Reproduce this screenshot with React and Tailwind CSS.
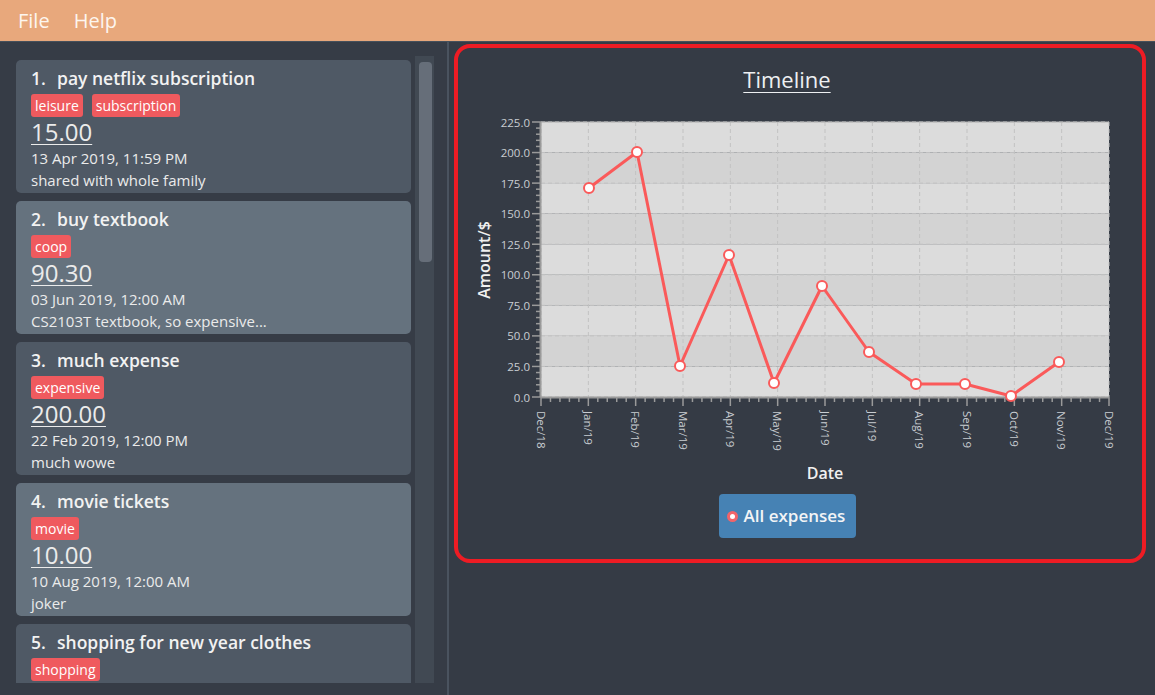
import React from "react";

const FONT = { fontFamily: '"Open Sans", "Noto Sans", sans-serif' };

const EXPENSES = [
  {
    id: 1,
    name: "pay netflix subscription",
    tags: ["leisure", "subscription"],
    amount: "15.00",
    date: "13 Apr 2019, 11:59 PM",
    remark: "shared with whole family",
  },
  {
    id: 2,
    name: "buy textbook",
    tags: ["coop"],
    amount: "90.30",
    date: "03 Jun 2019, 12:00 AM",
    remark: "CS2103T textbook, so expensive...",
  },
  {
    id: 3,
    name: "much expense",
    tags: ["expensive"],
    amount: "200.00",
    date: "22 Feb 2019, 12:00 PM",
    remark: "much wowe",
  },
  {
    id: 4,
    name: "movie tickets",
    tags: ["movie"],
    amount: "10.00",
    date: "10 Aug 2019, 12:00 AM",
    remark: "joker",
  },
  {
    id: 5,
    name: "shopping for new year clothes",
    tags: ["shopping"],
  },
];

const MONTHS = [
  "Dec/18", "Jan/19", "Feb/19", "Mar/19", "Apr/19", "May/19", "Jun/19",
  "Jul/19", "Aug/19", "Sep/19", "Oct/19", "Nov/19", "Dec/19",
];

// points in chart-local pixels
const POINTS = [
  [127, 78], [175, 42], [218, 256], [267, 145], [312, 273], [360, 176],
  [407, 242], [454, 274], [503, 274], [549, 286], [597, 252],
];

const PX0 = 79;
const PX1 = 647;
const PY0 = 12;
const PY1 = 287;

function ExpenseCard({ expense, index }) {
  const bg = index % 2 === 0 ? "bg-[#4f5965]" : "bg-[#65727e]";
  return (
    <div className={`${bg} h-[133px] shrink-0 rounded-[5px] pl-[15px] pt-[6px] text-[#ebebeb]`}>
      <div className="flex h-[24px] items-center text-[17.5px] font-semibold leading-[24px] text-[#f2f2f2]">
        <span className="w-[26px]">{expense.id}.</span>
        <span>{expense.name}</span>
      </div>
      <div className="mt-[4px] flex h-[23px] gap-[9px]">
        {expense.tags.map((tag) => (
          <span
            key={tag}
            className="flex h-[23px] items-center rounded-[3px] bg-[#ef5a5e] px-[4px] text-[14px] text-white"
          >
            {tag}
          </span>
        ))}
      </div>
      {expense.amount && (
        <>
          <div className="text-[24px] leading-[30px] underline decoration-1 underline-offset-[3px]">
            {expense.amount}
          </div>
          <div className="text-[15px] leading-[22px]">{expense.date}</div>
          <div className="text-[15px] leading-[22px]">{expense.remark}</div>
        </>
      )}
    </div>
  );
}

function TimelineChart() {
  const monthW = (PX1 - PX0) / 12;
  const bandH = (PY1 - PY0) / 9;
  const yTicks = Array.from({ length: 10 }, (_, i) => i);
  const linePoints = POINTS.map((p) => p.join(",")).join(" ");

  return (
    <svg width="660" height="380" viewBox="0 0 660 380" style={FONT}>
      {Array.from({ length: 9 }, (_, i) => (
        <rect
          key={`b${i}`}
          x={PX0}
          y={PY0 + i * bandH}
          width={PX1 - PX0}
          height={bandH}
          fill={i % 2 === 0 ? "#dcdcdc" : "#d3d3d3"}
        />
      ))}
      {yTicks.map((i) => (
        <line
          key={`h${i}`}
          x1={PX0}
          x2={PX1}
          y1={PY1 - i * bandH}
          y2={PY1 - i * bandH}
          stroke="#c2c2c2"
          strokeWidth="1"
          strokeDasharray="4 3"
        />
      ))}
      {MONTHS.map((m, i) => (
        <line
          key={`v${i}`}
          x1={PX0 + i * monthW}
          x2={PX0 + i * monthW}
          y1={PY0}
          y2={PY1}
          stroke="#c2c2c2"
          strokeWidth="1"
          strokeDasharray="4 3"
        />
      ))}
      <line x1={PX0} x2={PX1} y1={PY0} y2={PY0} stroke="#b5b5b5" />

      {/* y axis */}
      <line x1={PX0 - 0.5} x2={PX0 - 0.5} y1={PY0} y2={PY1} stroke="#9a9a9a" strokeWidth="2" />
      {yTicks.map((i) => {
        const y = PY1 - i * bandH;
        return (
          <g key={`yt${i}`}>
            <line x1={PX0 - 9} x2={PX0} y1={y} y2={y} stroke="#9a9a9a" strokeWidth="1.5" />
            <text
              x={PX0 - 11}
              y={y}
              textAnchor="end"
              dominantBaseline="central"
              fontSize="11.5"
              fill="#c9cdd2"
            >
              {(i * 25).toFixed(1)}
            </text>
            {i < 9 &&
              [1, 2, 3, 4].map((k) => (
                <line
                  key={k}
                  x1={PX0 - 5}
                  x2={PX0}
                  y1={y - (k * bandH) / 5}
                  y2={y - (k * bandH) / 5}
                  stroke="#9a9a9a"
                  strokeWidth="1.5"
                />
              ))}
          </g>
        );
      })}

      {/* x axis */}
      <line x1={PX0} x2={PX1} y1={PY1 + 0.5} y2={PY1 + 0.5} stroke="#9a9a9a" strokeWidth="2" />
      {MONTHS.map((m, i) => {
        const x = PX0 + i * monthW;
        return (
          <g key={`xt${i}`}>
            <line x1={x} x2={x} y1={PY1} y2={PY1 + 9} stroke="#9a9a9a" strokeWidth="1.5" />
            <text
              transform={`translate(${x} ${PY1 + 14}) rotate(90)`}
              dominantBaseline="central"
              fontSize="11.5"
              fill="#c9cdd2"
            >
              {m}
            </text>
            {i < 12 &&
              [1, 2, 3, 4].map((k) => (
                <line
                  key={k}
                  x1={x + (k * monthW) / 5}
                  x2={x + (k * monthW) / 5}
                  y1={PY1}
                  y2={PY1 + 5}
                  stroke="#9a9a9a"
                  strokeWidth="1.5"
                />
              ))}
          </g>
        );
      })}

      <text
        transform="translate(22 150) rotate(-90)"
        textAnchor="middle"
        dominantBaseline="central"
        fontSize="16"
        fontWeight="600"
        fill="#f0f0f0"
      >
        Amount/$
      </text>
      <text
        x={(PX0 + PX1) / 2}
        y="363"
        textAnchor="middle"
        dominantBaseline="central"
        fontSize="16"
        fontWeight="600"
        fill="#f0f0f0"
      >
        Date
      </text>

      <polyline
        points={linePoints}
        fill="none"
        stroke="#fa5a5a"
        strokeWidth="3"
        strokeLinejoin="round"
      />
      {POINTS.map(([x, y], i) => (
        <circle key={`p${i}`} cx={x} cy={y} r="5" fill="#ffffff" stroke="#fa5a5a" strokeWidth="2" />
      ))}
    </svg>
  );
}

export default function App() {
  return (
    <div className="flex h-[695px] w-[1155px] flex-col overflow-hidden bg-[#353b45]" style={FONT}>
      <div className="flex h-[42px] shrink-0 items-center gap-[24px] border-b border-[#46505b] bg-[#e8a87c] pl-[18px] text-[20px] text-[#fdf6ef]">
        <span>File</span>
        <span>Help</span>
      </div>

      <div className="flex min-h-0 flex-1">
        <div className="flex w-[447px] shrink-0 bg-[#363c46] pb-[12px] pl-[16px] pr-[13px] pt-[14px]">
          <div className="flex min-h-0 flex-1 gap-[4px]">
            <div className="flex min-h-0 flex-1 flex-col gap-[8px] overflow-hidden pt-[4px]">
              {EXPENSES.map((e, i) => (
                <ExpenseCard key={e.id} expense={e} index={i} />
              ))}
            </div>
            <div className="w-[19px] shrink-0 bg-[#414953] px-[2px] pl-[4px] pt-[6px]">
              <div className="h-[200px] w-[13px] rounded-[4px] bg-[#666e79]" />
            </div>
          </div>
        </div>
        <div className="w-[2px] shrink-0 bg-[#4a535f]" />

        <div className="flex-1 pl-[5px] pr-[9px] pt-[2px]">
          <div className="flex h-[519px] flex-col rounded-[16px] border-[4px] border-[#ee1c24] pl-[4px] pt-[16px]">
            <div className="w-[650px] text-center text-[22px] leading-[30px] text-[#eef0f2] underline decoration-1 underline-offset-[4px]">
              Timeline
            </div>
            <div className="mt-[16px] h-[380px]">
              <TimelineChart />
            </div>
            <div className="mt-[4px] flex w-[650px] justify-center">
              <div className="flex h-[44px] w-[137px] items-center gap-[6px] rounded-[4px] bg-[#4682b4] pl-[8px] text-[17px] font-semibold text-[#f2f4f6]">
                <span className="h-[11px] w-[11px] rounded-full border-[3px] border-[#f2646a] bg-white" />
                <span>All expenses</span>
              </div>
            </div>
          </div>
        </div>
      </div>
    </div>
  );
}
